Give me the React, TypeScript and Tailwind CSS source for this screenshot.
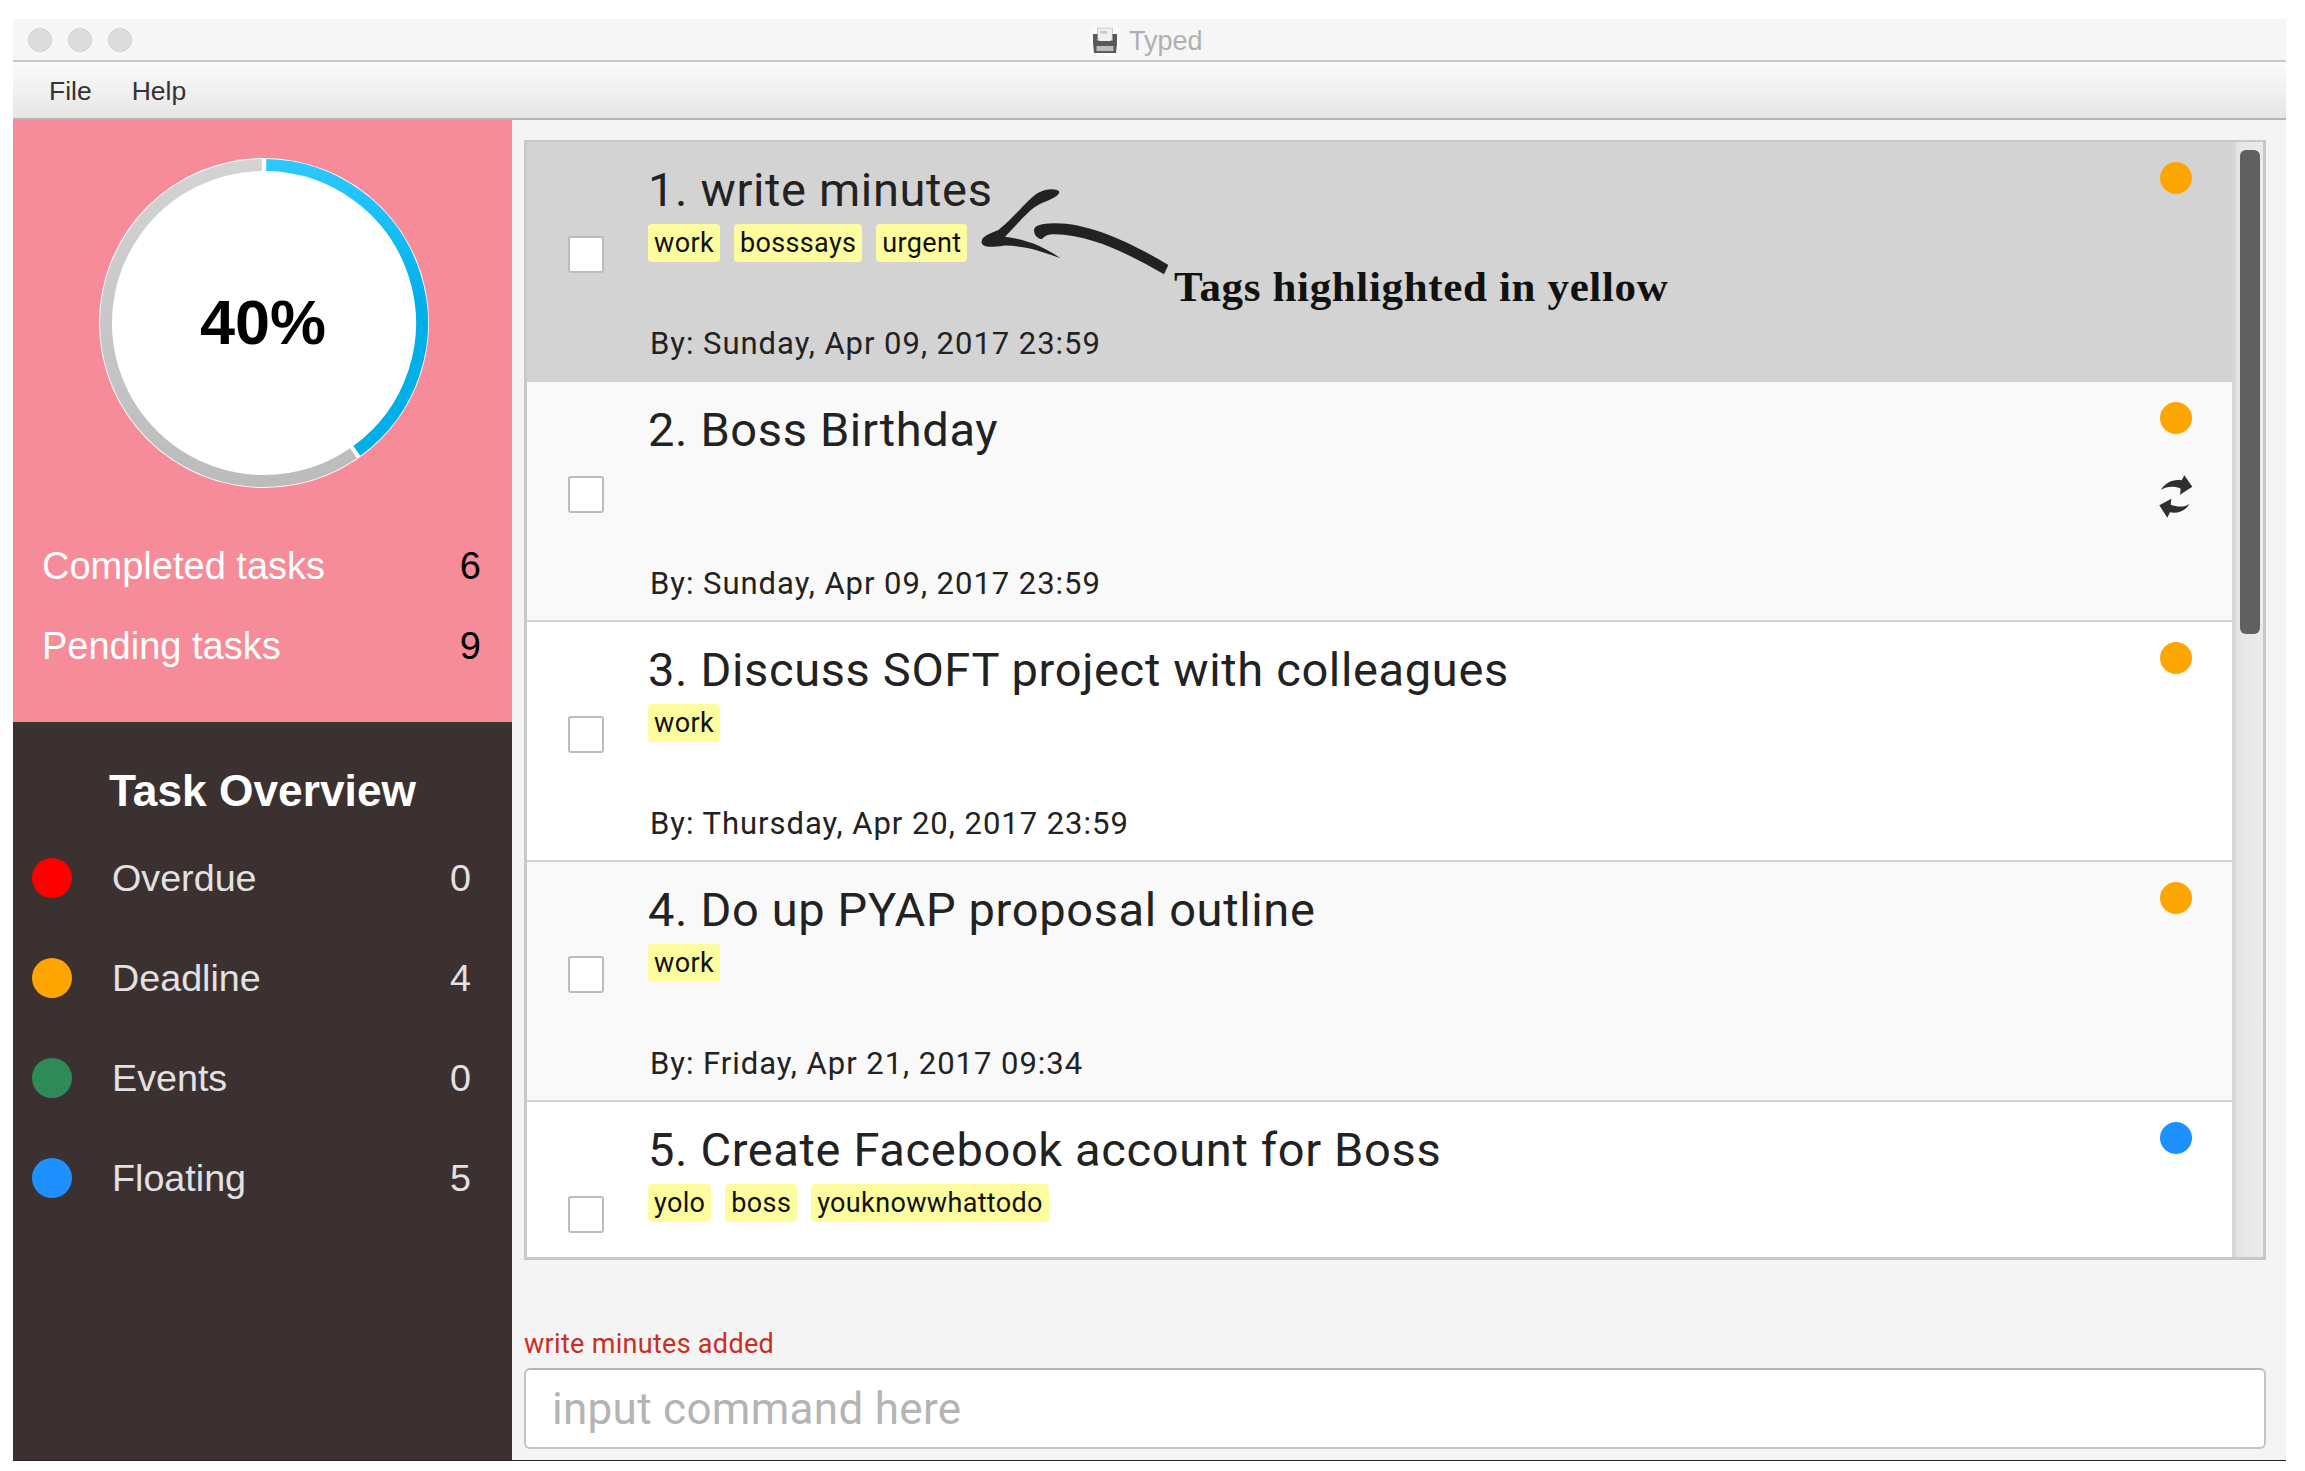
const tasks = [
	{ title: "1. write minutes", tags: ["work", "bosssays", "urgent"], by: "By: Sunday, Apr 09, 2017 23:59", dot: "bg-[#ffa500]", bg: "bg-[#d3d3d3]" },
	{ title: "2. Boss Birthday", tags: [], by: "By: Sunday, Apr 09, 2017 23:59", dot: "bg-[#ffa500]", bg: "bg-[#f9f9f9]", repeat: true },
	{ title: "3. Discuss SOFT project with colleagues", tags: ["work"], by: "By: Thursday, Apr 20, 2017 23:59", dot: "bg-[#ffa500]", bg: "bg-white" },
	{ title: "4. Do up PYAP proposal outline", tags: ["work"], by: "By: Friday, Apr 21, 2017 09:34", dot: "bg-[#ffa500]", bg: "bg-[#f9f9f9]" },
	{ title: "5. Create Facebook account for Boss", tags: ["yolo", "boss", "youknowwhattodo"], by: "", dot: "bg-[#1e90ff]", bg: "bg-white" },
];

const overview = [
	{ label: "Overdue", count: 0, dot: "bg-[#ff0000]" },
	{ label: "Deadline", count: 4, dot: "bg-[#ffa500]" },
	{ label: "Events", count: 0, dot: "bg-[#2e8b57]" },
	{ label: "Floating", count: 5, dot: "bg-[#1e90ff]" },
];

const polar = (deg: number, r: number) => {
	const a = ((deg - 90) * Math.PI) / 180;
	return `${165 + r * Math.cos(a)} ${165 + r * Math.sin(a)}`;
};
const arc = (from: number, to: number, r: number) =>
	`M ${polar(from, r)} A ${r} ${r} 0 ${to - from > 180 ? 1 : 0} 1 ${polar(to, r)}`;

const ProgressRing = () => (
	<div className="relative ml-[86px] mt-[38px] h-[330px] w-[330px]">
		<svg width="330" height="330" viewBox="0 0 330 330">
			<defs>
				<linearGradient id="blue" x1="0" y1="0" x2="0" y2="1">
					<stop offset="0" stopColor="#2cc8ff" />
					<stop offset="0.5" stopColor="#00aee8" />
				</linearGradient>
				<linearGradient id="grey" x1="0" y1="0" x2="0" y2="1">
					<stop offset="0" stopColor="#d3d3d3" />
					<stop offset="1" stopColor="#bcbcbc" />
				</linearGradient>
			</defs>
			<circle cx="165" cy="165" r="165" fill="#ffffff" />
			<path d={arc(145.5, 359.2, 158)} fill="none" stroke="url(#grey)" strokeWidth="12" />
			<path d={arc(0.8, 144, 158)} fill="none" stroke="url(#blue)" strokeWidth="12" />
		</svg>
		<div className="absolute inset-0 flex items-center justify-center pb-[2px] pr-[2px] text-[63px] font-bold text-black">40%</div>
	</div>
);

const TypewriterIcon = () => (
	<svg width="30" height="30" viewBox="0 0 30 30">
		<rect x="0" y="0" width="30" height="30" rx="6" fill="#fafafa" />
		<rect x="7.5" y="2" width="15" height="11" fill="#efefef" stroke="#c4c4c4" strokeWidth="0.8" />
		<rect x="10" y="5" width="7" height="2.5" fill="#c8c8c8" />
		<path d="M3 8h4.500v6.500h15V8H27v9H3z" fill="#5a5a5a" />
		<rect x="9.500" y="12" width="11" height="3" fill="#f2f2f2" />
		<path d="M3 17h24l-1 10H4z" fill="#5a5a5a" />
		<rect x="6.500" y="20" width="17" height="5" fill="#bdbdbd" />
	</svg>
);

const RepeatIcon = () => (
	<svg width="60" height="60" viewBox="-12 0 180 180" className="-mx-[14px] mt-[32px]">
		<path d="M33 72C45 50 70 38 95 43L103 28L127 62L90 86L92 68C75 60 50 60 33 72Z" fill="#2f2f2f" />
		<path d="M118 113C110 132 85 144 60 139L52 155L28 118L64 98L62 116C80 123 105 125 118 113Z" fill="#2f2f2f" />
	</svg>
);

const HandArrow = () => (
	<svg width="220" height="120" viewBox="0 0 660 360" className="absolute left-[433px] top-[28px]">
		<path
			d="M298 65C290 55 260 55 235 68C205 85 175 130 115 180C90 190 62 200 65 218C68 232 90 232 130 227C190 225 250 245 302 265C260 235 205 208 135 200C170 165 210 115 240 102C265 90 298 80 298 65Z"
			fill="#222222"
		/>
		<path
			d="M222 180C225 165 245 162 280 160C380 158 500 210 625 285L612 313C520 260 400 195 285 193C265 193 255 197 245 208C232 205 222 195 222 180Z"
			fill="#222222"
		/>
	</svg>
);

const TaskRow = ({ task, first }: { task: (typeof tasks)[number]; first: boolean }) => (
	<div className={`relative flex h-[240px] shrink-0 border-b-2 border-[#d3d3d3] ${task.bg}`}>
		<span className="ml-[41px] mt-[94px] h-[37px] w-[36px] shrink-0 rounded-[3px] border-2 border-[#bcbcbc] bg-white"></span>
		<div className="ml-[44px] flex flex-col pb-[18px] pt-[22px] font-['Roboto',sans-serif]">
			<h3 className="h-[52px] text-[47px] leading-[52px] tracking-[0.65px] text-[#222]">{task.title}</h3>
			<div className="mt-[8px] flex gap-[14px]">
				{task.tags.map((tag) => (
					<span
						key={tag}
						className="flex h-[38px] items-center rounded-[4px] bg-[#fdfda0] px-[6px] text-[27px] tracking-[0.35px] text-[#111]"
					>
						{tag}
					</span>
				))}
			</div>
			<p className="mt-auto pl-[2px] text-[31px] leading-[36px] tracking-[0.97px] text-[#222]">{task.by}</p>
		</div>
		<div className="ml-auto mr-[40px] flex w-[32px] flex-col items-center pt-[20px]">
			<span className={`h-[32px] w-[32px] shrink-0 rounded-full ${task.dot}`}></span>
			{task.repeat && <RepeatIcon />}
		</div>
		{first && (
			<>
				<HandArrow />
				<span className="absolute left-[647px] top-[120px] font-['Liberation_Serif',serif] text-[43px] font-bold leading-[50px] tracking-[0.65px] text-[#111]">
					Tags highlighted in yellow
				</span>
			</>
		)}
	</div>
);

const App: React.FC = () => {
	return (
		<div className="min-h-[1471px] bg-white pl-[13px] pt-[19px] font-['Liberation_Sans',sans-serif]">
			<div className="flex h-[1442px] w-[2273px] flex-col overflow-hidden border-b border-[#222]">
				<div className="relative flex h-[43px] shrink-0 items-center border-b-2 border-[#c8c8c8] bg-[#f6f6f6] pl-[15px]">
					<div className="flex gap-[16px]">
						<span className="h-[24px] w-[24px] rounded-full border border-[#cfcfcf] bg-[#dcdcdc]"></span>
						<span className="h-[24px] w-[24px] rounded-full border border-[#cfcfcf] bg-[#dcdcdc]"></span>
						<span className="h-[24px] w-[24px] rounded-full border border-[#cfcfcf] bg-[#dcdcdc]"></span>
					</div>
					<div className="absolute left-[1077px] top-[6px] flex items-center gap-[9px] text-[27px] leading-[32px] text-[#b0b0b0]">
						<TypewriterIcon />
						<span>Typed</span>
					</div>
				</div>

				<div className="flex h-[58px] shrink-0 items-center gap-[40px] border-b-2 border-[#b4b4b4] bg-linear-to-b from-[#fbfbfb] to-[#e6e6e6] pl-[36px] pt-[3px] text-[26.5px] text-[#333]">
					<span>File</span>
					<span>Help</span>
				</div>

				<div className="flex min-h-0 flex-1">
					<aside className="flex w-[499px] shrink-0 flex-col">
						<div className="flex h-[602px] shrink-0 flex-col bg-[#f68b99]">
							<ProgressRing />
							<div className="mt-[56px] flex flex-col gap-[36px] pl-[29px] pr-[31px] text-[38px] leading-[44px]">
								<div className="flex justify-between">
									<span className="text-white">Completed tasks</span>
									<span className="text-black">6</span>
								</div>
								<div className="flex justify-between">
									<span className="text-white">Pending tasks</span>
									<span className="text-black">9</span>
								</div>
							</div>
						</div>
						<div className="flex-1 bg-[#3b3131] pt-[43px]">
							<h2 className="text-center text-[44.300px] font-bold leading-[52px] text-white">Task Overview</h2>
							<ul className="mt-[11px] flex flex-col">
								{overview.map((item) => (
									<li key={item.label} className="flex h-[100px] items-center pl-[19px] pr-[41px] text-[37.700px] text-[#e3e1e1]">
										<span className={`mr-[40px] h-[40px] w-[40px] rounded-full ${item.dot}`}></span>
										<span>{item.label}</span>
										<span className="ml-auto">{item.count}</span>
									</li>
								))}
							</ul>
						</div>
					</aside>

					<main className="flex min-w-0 flex-1 flex-col bg-[#f4f4f4] pl-[12px] pr-[20px] pt-[20px]">
						<div className="flex h-[1120px] shrink-0 overflow-hidden border-x-[3px] border-b-[3px] border-t-2 border-[#c8c8c8]">
							<div className="flex min-w-0 flex-1 flex-col overflow-hidden">
								{tasks.map((task, i) => (
									<TaskRow key={task.title} task={task} first={i === 0} />
								))}
							</div>
							<div className="w-[31px] shrink-0 border-l-4 border-[#d6d6d6] bg-linear-to-r from-[#e4e4e4] to-[#ececec] pl-[4px] pt-[8px]">
								<div className="h-[484px] w-[20px] rounded-[6px] bg-[#606060]"></div>
							</div>
						</div>
						<p className="mt-[66px] font-['Roboto',sans-serif] text-[27px] leading-[36px] tracking-[0.3px] text-[#cb2d21]">write minutes added</p>
						<input
							placeholder="input command here"
							className="mt-[6px] h-[81px] w-full shrink-0 rounded-[6px] border-2 border-[#c4c4c4] border-t-[#b5b5b5] bg-white pl-[26px] font-['Roboto',sans-serif] text-[44px] tracking-[0.3px] outline-none placeholder:text-[#b4b4b4]"
						/>
					</main>
				</div>
			</div>
		</div>
	);
};
export default App;
